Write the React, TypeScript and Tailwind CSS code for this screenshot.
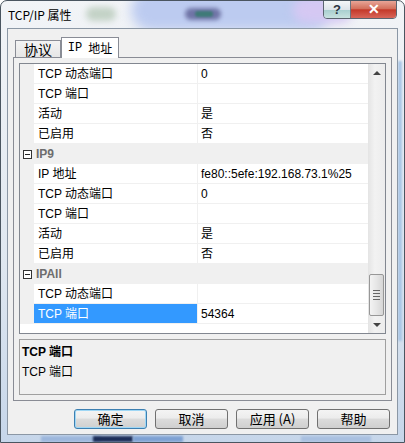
import React from 'react';

type Row =
  | { kind: 'prop'; label: string; value?: string; selected?: boolean }
  | { kind: 'cat'; label: string };

const rows: Row[] = [
  { kind: 'prop', label: 'TCP 动态端口', value: '0' },
  { kind: 'prop', label: 'TCP 端口' },
  { kind: 'prop', label: '活动', value: '是' },
  { kind: 'prop', label: '已启用', value: '否' },
  { kind: 'cat', label: 'IP9' },
  { kind: 'prop', label: 'IP 地址', value: 'fe80::5efe:192.168.73.1%25' },
  { kind: 'prop', label: 'TCP 动态端口', value: '0' },
  { kind: 'prop', label: 'TCP 端口' },
  { kind: 'prop', label: '活动', value: '是' },
  { kind: 'prop', label: '已启用', value: '否' },
  { kind: 'cat', label: 'IPAll' },
  { kind: 'prop', label: 'TCP 动态端口' },
  { kind: 'prop', label: 'TCP 端口', value: '54364', selected: true },
];

const uiFont = "font-['Liberation_Sans','Noto_Sans_CJK_SC',sans-serif]";

const GridRow: React.FC<{ row: Row }> = ({ row }) => {
  if (row.kind === 'cat') {
    return (
      <div className="flex h-[20px] items-center bg-[#f0f0f0]">
        <div className="flex w-[14px] justify-center pl-[1px]">
          <div className="relative h-[9px] w-[9px] border border-[#333] bg-white">
            <div className="absolute left-[1px] top-[3px] h-[1px] w-[5px] bg-[#222]" />
          </div>
        </div>
        <span className="pl-[2px] text-[12px] font-bold text-[#6d6d6d]">{row.label}</span>
      </div>
    );
  }
  return (
    <div className="flex h-[20px]">
      <div className="w-[14px] bg-[#f0f0f0]" />
      <div
        className={`flex w-[164px] items-center border-b border-r border-[#f0f0f0] pl-[4px] text-[12px] ${
          row.selected ? 'bg-[#3399ff] text-white' : 'bg-white text-black'
        }`}
      >
        {row.label}
      </div>
      <div className="flex flex-1 items-center border-b border-[#f0f0f0] bg-white pl-[3px] text-[12px] text-black">
        {row.value}
      </div>
    </div>
  );
};

const ScrollBar: React.FC = () => (
  <div className="flex w-[17px] flex-col bg-[linear-gradient(to_right,#e4e4e4,#f2f2f2_40%,#ececec)]">
    <div className="flex h-[17px] items-center justify-center">
      <div className="h-0 w-0 border-x-[4px] border-b-[4px] border-x-transparent border-b-[#444]" />
    </div>
    <div className="flex-1" />
    <div className="mx-[1px] flex h-[42px] flex-col items-center justify-center gap-[2px] rounded-[2px] border border-[#979797] bg-[linear-gradient(to_right,#f3f3f3,#e6e6e6_50%,#d6d6d6)]">
      <div className="h-[1px] w-[7px] bg-[#666]" />
      <div className="h-[1px] w-[7px] bg-[#666]" />
      <div className="h-[1px] w-[7px] bg-[#666]" />
      <div className="h-[1px] w-[7px] bg-[#666]" />
    </div>
    <div className="flex h-[17px] items-center justify-center">
      <div className="h-0 w-0 border-x-[4px] border-t-[4px] border-x-transparent border-t-[#444]" />
    </div>
  </div>
);

const DlgButton: React.FC<{ label: string; primary?: boolean }> = ({ label, primary }) => (
  <button
    className={`flex h-[20px] w-[73px] items-center justify-center rounded-[3px] border text-[13px] text-black bg-[linear-gradient(to_bottom,#f4f4f4,#ececec_45%,#dcdcdc_50%,#cfcfcf)] ${
      primary ? 'border-[#3c7fb1] shadow-[inset_0_0_0_1px_#9fd7f5]' : 'border-[#707070]'
    }`}
  >
    {label}
  </button>
);

export default function App() {
  return (
    <div className={`${uiFont} relative h-[443px] w-[405px] overflow-hidden rounded-t-[7px] border border-[#4a5560] bg-[linear-gradient(to_bottom,#f2f4f7,#dfe7f0_60%,#c6d6ea)]`}>
      {/* glass reflections behind the frame */}
      <div className="absolute left-[85px] top-[6px] h-[14px] w-[30px] rounded-full bg-[#c3d2c6] blur-[3px]" />
      <div className="absolute left-[130px] top-[-12px] h-[42px] w-[200px] rounded-full bg-[#bccbf0] blur-[6px]" />
      <div className="absolute left-[184px] top-[7px] h-[12px] w-[36px] rounded-full bg-[#6f74a6] blur-[2px]" />
      <div className="absolute left-[194px] top-[10px] h-[6px] w-[18px] rounded-full bg-[#3f7a78] blur-[1px]" />
      <div className="absolute left-[292px] top-[-4px] h-[26px] w-[60px] rounded-full bg-[#d5c8f3] blur-[5px]" />
      <div className="absolute right-[2px] top-[60px] h-[280px] w-[4px] bg-[#a9c6e6] blur-[1px]" />
      <div className="absolute bottom-0 left-[40px] h-[6px] w-[60px] bg-[#9db7dc] blur-[1px]" />
      <div className="absolute bottom-0 left-[92px] h-[6px] w-[40px] bg-[#1d2f5a] blur-[1px]" />
      <div className="absolute bottom-0 left-[132px] h-[6px] w-[50px] bg-[#7ea1d3] blur-[1px]" />
      <div className="absolute bottom-0 left-[300px] h-[6px] w-[70px] bg-[#a9c0e0] blur-[1px]" />

      {/* caption */}
      <div className="relative flex h-[27px] items-center pl-[7px] text-[12px] text-black font-['Noto_Sans_CJK_SC',sans-serif]">
        TCP/IP 属性
      </div>
      <div className="absolute right-[7px] top-[-1px] flex h-[19px] overflow-hidden rounded-b-[4px] border border-[#5b6470]">
        <div className="flex w-[27px] items-center justify-center border-r border-[#6b7480] bg-[linear-gradient(to_bottom,#f4f6f8,#dde4ea_50%,#a9cfd0_55%,#c8e2e0)] text-[13px] font-bold text-[#2b3440]">
          ?
        </div>
        <div className="flex w-[45px] items-center justify-center bg-[linear-gradient(to_bottom,#e8a597,#d3705c_45%,#c4392a_52%,#d8665a)] text-[14px] font-bold text-white">
          ✕
        </div>
      </div>

      {/* client area */}
      <div className="relative mx-[6px] flex h-[407px] flex-col border border-[#8b97a5] bg-[#f0f0f0]">
        {/* tab strip */}
        <div className="flex h-[28px] items-end pl-[7px]">
          <div className="flex h-[17px] w-[46px] items-center justify-center border border-b-0 border-[#898c95] bg-[linear-gradient(to_bottom,#f3f3f3,#e6e6e6)] pt-[1px] text-[14px] text-black font-['Noto_Sans_CJK_SC',sans-serif]">
            协议
          </div>
          <div className="relative top-[1px] z-10 flex h-[21px] w-[58px] items-center justify-center border border-b-0 border-[#898c95] bg-white text-[12px] text-black">
            <span className="font-['Liberation_Mono',monospace]">IP</span>
            <span className="pl-[6px] font-['Noto_Sans_CJK_SC',sans-serif]">地址</span>
          </div>
        </div>

        {/* tab page */}
        <div className="mx-[5px] flex h-[344px] flex-col gap-[5px] border border-[#898c95] bg-[#f0f0f0] p-[5px]">
          <div className="flex h-[272px] border border-[#828790] bg-white">
            <div className="flex flex-1 flex-col">
              {rows.map((r, i) => (
                <GridRow key={i} row={r} />
              ))}
            </div>
            <ScrollBar />
          </div>
          <div className="flex h-[56px] flex-col border border-[#a0a0a0] bg-[#f0f0f0] px-[2px] pt-[2px] text-[12px] text-black">
            <div className="h-[20px] font-bold leading-[20px]">TCP 端口</div>
            <div className="h-[20px] leading-[20px]">TCP 端口</div>
          </div>
        </div>

        {/* dialog buttons */}
        <div className="flex justify-end gap-[8px] pr-[7px] pt-[8px] font-['Noto_Sans_CJK_SC',sans-serif]">
          <DlgButton label="确定" primary />
          <DlgButton label="取消" />
          <DlgButton label="应用 (A)" />
          <DlgButton label="帮助" />
        </div>
      </div>
    </div>
  );
}
